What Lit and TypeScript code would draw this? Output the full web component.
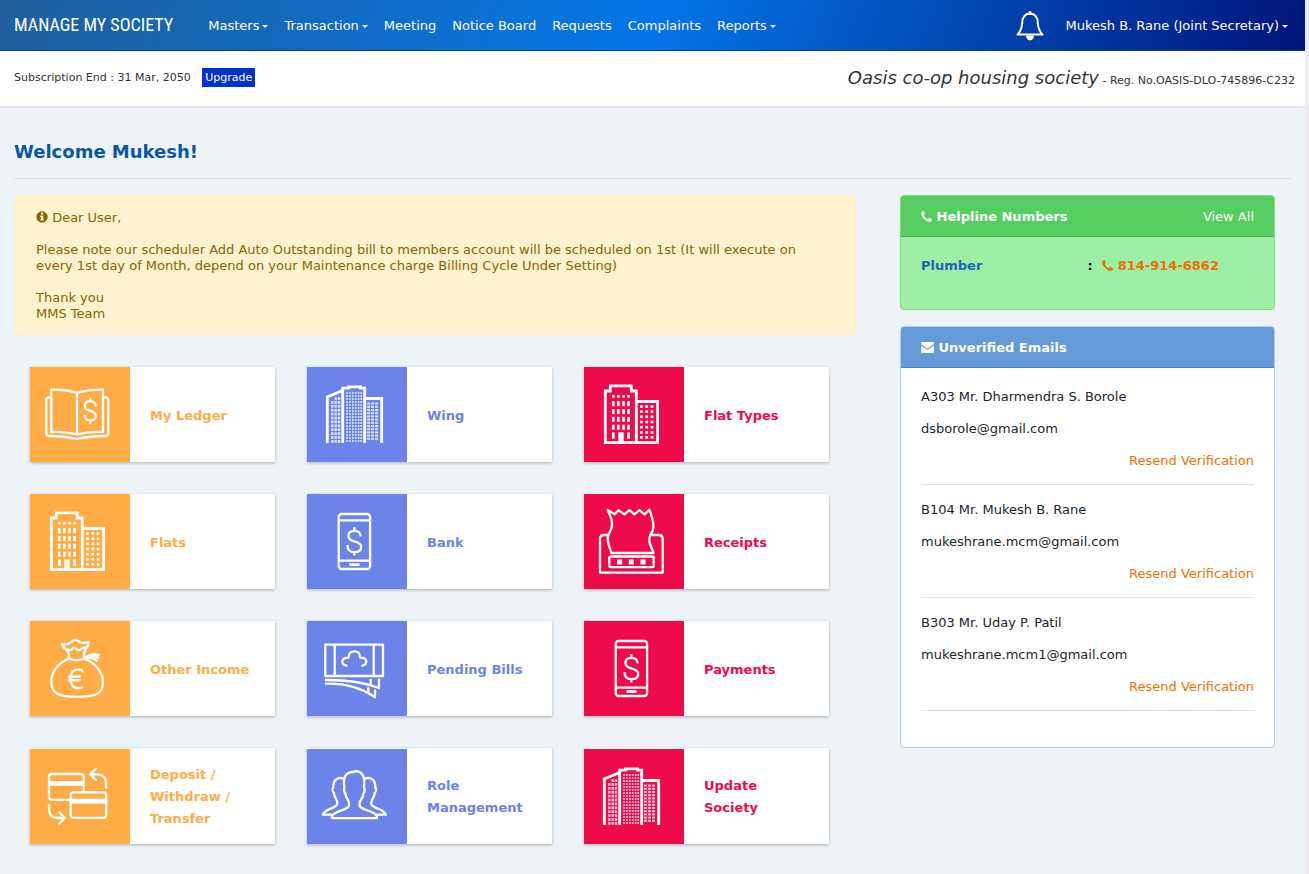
import { LitElement, html, svg, css, nothing } from "lit";
import { customElement, property } from "lit/decorators.js";

type IconName =
  | "ledger" | "towers" | "flats" | "phone" | "receipts" | "bag" | "bills" | "cards" | "people";

const rects = (xs: number[], ys: number[], w: number, h: number) =>
  xs.flatMap((x) => ys.map((y) => svg`<rect class="solid" x=${x - w / 2} y=${y - h / 2} width=${w} height=${h} />`));

const steps = (from: number, to: number, by: number) => {
  const out: number[] = [];
  for (let v = from; v <= to; v += by) out.push(v);
  return out;
};

const icons: Record<IconName, unknown> = {
  ledger: svg`
    <path d="M21.3 65V22.6Q35 22.2 47 25.6Q60 22.2 73 22.6V65Q60 64.6 47 67.4Q35 64.6 21.3 65ZM47 25.6V67" />
    <path d="M21 30.3H19Q16.3 30.3 16.3 33V66.6Q16.3 69 19 69Q34 69 47 72Q60 69 75.6 69Q78.3 69 78.3 66.6V33Q78.3 30.3 75.6 30.3H73.5" />
    <path d="M60.3 30.8V34M60.3 53.6V57M65.8 39.5Q65 34.2 60.3 34.2Q54.8 34.2 54.8 39Q54.8 42.4 60.3 43.8Q65.8 45.4 65.8 48.8Q65.8 53.6 60.3 53.6Q55 53.6 54.6 48.2" />`,
  towers: svg`
    <g class="heavy">
      <path d="M20.3 76V30L35.7 23.5M35.7 76V21.2H41.5V19.8H53.5V21.2H57.7V76M57.7 31.5H74.7V76" />
    </g>
    <g opacity="0.8">
      ${rects([25.3, 28.7, 32], steps(35.4, 75, 3.9), 2.4, 2.7)}
      ${rects([28.7, 32], [31.6], 2.4, 2.7)}
      ${rects([40, 42.9, 45.8, 48.7, 51.6, 54.2], steps(26, 75, 3), 1.7, 1.8)}
      ${rects([61.6, 65.5, 69.5], steps(36.6, 75, 3.2), 3, 2)}
    </g>`,
  flats: svg`
    <g class="heavy">
      <path d="M21.3 75.7V24H26.3V18.8H47.3V24H52.3V75.7ZM52.3 34.5H73.6V75.7H52.3" />
    </g>
    ${rects([29.3, 34.3, 39.5, 44.6], [29.3], 2.7, 2.7)}
    ${rects([29.3, 34.3, 39.5, 44.6], [36.7, 44.6, 52.3, 60.2], 2.7, 5)}
    ${rects([29.3, 44.6], [68.6], 2.7, 6.4)}
    <rect class="solid" x="34.3" y="65.3" width="5.4" height="10" />
    ${rects([57.4, 62.7, 68], [39.6, 44.7, 49.8, 55, 60.2, 65.4, 70.4], 2.8, 2.6)}`,
  phone: svg`
    <rect x="31.7" y="20" width="31.4" height="55" rx="3" />
    <path d="M32 26.3H63M32 66.7H63" />
    <path class="heavy" stroke-linecap="round" d="M43.6 70.7H51.4" />
    <path d="M47.3 33V37M47.3 58V61.5M53.8 42.4Q53.2 36.8 47.6 36.8Q41.4 36.8 41.4 42Q41.4 45.8 47.3 47.4Q54.2 49.2 54.2 53Q54.2 58.2 47.3 58.2Q40.6 58.2 40.4 51" />`,
  receipts: svg`
    <path d="M25 41H20Q16 41 16 45V78.6H78.7V45Q78.7 41 74.7 41H67" />
    <path d="M23.7 15.9L30.8 20.2L34.4 16.2L40.4 20.4L45.4 16.2L50.4 20.4L55.4 16.2L60.4 20.4L65.4 15.8C67.5 22 71.5 30 68.6 36.8C65 42 64.6 46 66 50L69.6 59H27.4C26 53 21.5 47 25 39.5C29.5 32 29 27 23.7 15.9Z" />
    <rect x="25.3" y="62.5" width="44.4" height="10.7" rx="1.6" />
    ${rects([35.7, 47.3, 59], [68], 5, 5)}`,
  bag: svg`
    <path d="M39 37.6Q39.4 31 36 28.4Q33 26 31.8 23.2Q37.5 24 40.4 21.6Q43.6 18.6 45.4 18.6Q47.6 19 49.8 21.2Q53.4 22.8 58.8 21Q58.8 24.4 56 28Q53.4 31.5 54.2 37.6" />
    <path d="M37 28.2Q41 30.2 42.6 27.6Q44.2 25.8 46.2 27.6Q48 30 50.6 28.4Q53 26.4 57 26.2" />
    <path d="M39 37.6Q46.6 40.8 54.2 37.6C66 42 73 52 73 61.5C73 72.5 66 75.8 47.3 75.8C28 75.8 21.3 72.5 21.3 60.5C21.3 51 28 42 39 37.6Z" />
    <path d="M54.2 37.4Q60 31.6 69.6 34.4M54.2 37.4Q63 35.5 67.6 40.4M58 34.6Q64 34 69 37.4" />
    <path d="M53 51Q51.6 48.4 48.6 48.4C42.6 48.4 40.4 52.4 40.4 57.6C40.4 63 43 67.2 48.6 67.2Q51 67.2 53 66M38 55.6H50.6M38 59.4H50.6" />`,
  bills: svg`
    <path d="M18.3 23.7H76V55H18.3ZM27.7 23.7V55M66.7 23.7V55" />
    <path d="M40.5 44.8Q35.3 44.4 35.3 40.6Q35.8 36.4 41.6 36.6Q41.6 30.4 47.3 30.4Q53 30.4 53 36.6Q59.2 36.4 59.2 40.6Q59 44.4 54.3 44.8" />
    <path d="M18 59Q50 58.6 72 67V57.6M18 62.7Q46 61.4 68 76V68.5M63.7 58V64M61.3 66.3V71.6" />`,
  cards: svg`
    <path d="M40.7 50.8H22Q19 50.8 19 47.8V28Q19 25 22 25H50.7Q53.7 25 53.7 28V43" />
    <rect x="40.7" y="43.3" width="35.5" height="25.6" rx="3" />
    <rect class="solid" x="19" y="32" width="34.7" height="4.8" />
    <rect class="solid" x="40.7" y="49.7" width="35.5" height="5" />
    <path d="M76 39.4V34Q76 25.3 67 25.3H60.2M66.8 19L60 25.3L66.8 31.6M19 55V60Q19 69 28 69H34.6M28.6 62.8L35 69L28.6 75.4" />`,
  people: svg`
    <path d="M25 69.2V66.8C30 60.5 42.4 61.5 42.2 55.5C42.2 50 38.6 50 38.4 44.5C36.4 42.5 37.2 40 37.4 38.5C36 29 38 22.6 47 23L48.6 22C55 22.6 58.4 27 57 38.5C58 40 58 43 56.4 44.5C56.4 50 52.4 50 52.4 55.5C52.4 61.5 65 60.5 69.8 66.8V69.2Z" />
    <path d="M37 29.6C30 27.4 26 31.6 26.4 38C25 40 25.4 42.6 27 44C27 49 30.6 50 30.4 54.4C30 60 18.6 58.6 15.8 65.7H25.4" />
    <path d="M57.6 29.6C64.6 27.4 68.6 31.6 68.2 38C69.6 40 69.2 42.6 67.6 44C67.6 49 64 50 64.2 54.4C64.6 60 76 58.6 78.8 65.7H69.2" />`,
};

const phoneGlyph = html`<svg class="glyph" viewBox="0 0 11 11" width="11" height="11" aria-hidden="true">
  <path d="M11 8.7Q11 10 9.8 10.6Q8.4 11.3 6.6 10.5Q4 9.3 2.3 7.2Q0.3 4.8 0.1 2.9Q0 1.3 1.2 0.4Q2 -0.1 2.6 0.2L3.8 2.4Q4 2.9 3.3 3.5Q2.7 4 2.9 4.4Q4 6.7 6.5 8Q6.9 8.2 7.4 7.5Q8 6.8 8.5 7L10.6 8.1Q11 8.3 11 8.7Z" fill="currentColor" />
</svg>`;

@customElement("society-tile")
export class SocietyTile extends LitElement {
  @property() label = "";
  @property() icon: IconName = "ledger";
  @property({ reflect: true }) tone = "orange";

  static styles = css`
    :host { display: block; --tone: #ffac47; }
    :host([tone="blue"]) { --tone: #6c83ea; }
    :host([tone="red"]) { --tone: #ef0b4a; }
    .tile {
      display: flex;
      align-items: center;
      height: 100%;
      background: #fff;
      box-shadow: 0 1px 3px rgba(0, 0, 0, 0.28);
      color: var(--tone);
      font-weight: bold;
      line-height: 22px;
      text-decoration: none;
    }
    .pic { flex: none; display: block; width: 100px; height: 95px; background: var(--tone); }
    .pic path, .pic rect { fill: none; stroke: #fff; stroke-width: 2.3; stroke-linejoin: round; }
    .pic .heavy, .pic .heavy path { stroke-width: 2.8; stroke-linejoin: miter; }
    .pic .solid { fill: #fff; stroke: none; }
    .label { padding: 16px 20px 14px; }
  `;

  render() {
    return html`<a class="tile" href="#">
      <svg class="pic" viewBox="0 0 100 95" aria-hidden="true">${icons[this.icon]}</svg>
      <span class="label">${this.label}</span>
    </a>`;
  }
}

@customElement("app-root")
export class AppRoot extends LitElement {
  private menu = [
    { text: "Masters", more: true },
    { text: "Transaction", more: true },
    { text: "Meeting", more: false },
    { text: "Notice Board", more: false },
    { text: "Requests", more: false },
    { text: "Complaints", more: false },
    { text: "Reports", more: true },
  ];

  private tiles: { label: string; icon: IconName; tone: string }[] = [
    { label: "My Ledger", icon: "ledger", tone: "orange" },
    { label: "Wing", icon: "towers", tone: "blue" },
    { label: "Flat Types", icon: "flats", tone: "red" },
    { label: "Flats", icon: "flats", tone: "orange" },
    { label: "Bank", icon: "phone", tone: "blue" },
    { label: "Receipts", icon: "receipts", tone: "red" },
    { label: "Other Income", icon: "bag", tone: "orange" },
    { label: "Pending Bills", icon: "bills", tone: "blue" },
    { label: "Payments", icon: "phone", tone: "red" },
    { label: "Deposit / Withdraw / Transfer", icon: "cards", tone: "orange" },
    { label: "Role Management", icon: "people", tone: "blue" },
    { label: "Update Society", icon: "towers", tone: "red" },
  ];

  private unverified = [
    { name: "A303 Mr. Dharmendra S. Borole", email: "dsborole@gmail.com" },
    { name: "B104 Mr. Mukesh B. Rane", email: "mukeshrane.mcm@gmail.com" },
    { name: "B303 Mr. Uday P. Patil", email: "mukeshrane.mcm1@gmail.com" },
  ];

  static styles = css`
    :host {
      display: flex;
      min-height: 100vh;
      background: #eef3f8;
      color: #212529;
      font: 13px/16px "DejaVu Sans", Verdana, sans-serif;
    }
    * { box-sizing: border-box; }
    a { text-decoration: none; color: inherit; }
    p, h1, h2 { margin: 0; }
    .page { flex: 1; min-width: 0; }
    .track { flex: none; width: 4px; background: #ececf1; }
    .glyph { vertical-align: -1px; }

    .nav {
      display: flex;
      align-items: center;
      height: 51px;
      padding: 2px 17px 0 14px;
      border-bottom: 1px solid #00427c;
      background: linear-gradient(110deg, #20609c 0%, #0475e8 50%, #00157a 100%);
      color: #fff;
    }
    .brand {
      margin-right: 35px;
      padding-bottom: 3px;
      font: 18px/24px "Roboto Condensed", "Open Sans Condensed", sans-serif;
    }
    .menu { display: flex; gap: 16px; flex: 1; margin: 0; padding: 0; list-style: none; }
    .more { display: flex; align-items: center; gap: 3px; }
    .more::after {
      content: "";
      border: 3px solid transparent;
      border-top-color: currentColor;
      border-bottom: 0;
    }
    .bell { display: block; margin-right: 22px; padding: 0; border: 0; background: none; color: inherit; }
    .bell svg { display: block; }

    .sub {
      display: flex;
      align-items: center;
      justify-content: space-between;
      height: 57px;
      padding: 0 10px 2px 14px;
      border-bottom: 2px solid #e4e6ea;
      background: #fff;
      color: #333;
      font-size: 11px;
    }
    .upgrade {
      height: 19px;
      margin-left: 8px;
      padding: 0 3px;
      border: 0;
      background: #0033cc;
      color: #fff;
      font: inherit;
    }
    .society { font-size: 18px; line-height: 24px; }

    .main { padding: 33px 14px 30px; }
    .welcome {
      padding-bottom: 15px;
      border-bottom: 1px solid #dbdfe4;
      color: #0a57a3;
      font-size: 18px;
      line-height: 22px;
    }
    .columns {
      display: grid;
      grid-template-columns: minmax(0, 842fr) minmax(0, 375fr);
      gap: 44px;
      align-items: start;
      padding: 16px 16px 0 0;
    }
    .alert {
      padding: 14px 21px 12px;
      border: 1px solid #ffeeba;
      border-radius: 4px;
      background: #fff2cf;
      color: #856404;
    }
    .alert p + p { margin-top: 16px; }
    .tiles {
      display: grid;
      grid-template-columns: repeat(3, minmax(0, 1fr));
      gap: 32px;
      padding: 32px 27px 0 16px;
    }
    .side { display: grid; gap: 16px; }
    .card { border: 1px solid #b5cfea; border-radius: 4px; background: #fff; overflow: hidden; }
    .head {
      display: flex;
      justify-content: space-between;
      padding: 13px 20px 11px;
      border-bottom: 1px solid #4f83bd;
      background: #659ad9;
      color: #fff;
    }
    .title { font-size: 13px; line-height: 16px; }
    .card.green { border-color: #7fdc8a; background: #9eeea6; }
    .green .head { border-color: #47ac51; background: #55cd61; }
    .body { padding: 21px 20px 19px; }
    .numbers { width: 100%; margin-bottom: 16px; border-collapse: collapse; font-weight: bold; }
    .numbers th, .numbers td { padding: 0; text-align: left; color: #000; }
    .numbers .who { width: 50%; color: #1b66bd; }
    .numbers .tel { color: #ee7202; }
    .tel a { margin-left: 8px; }
    .person { padding-bottom: 15px; border-bottom: 1px solid #e1e2e3; }
    .person + .person { padding-top: 17px; }
    .person p + p { margin-top: 16px; }
    .people { margin-bottom: 17px; }
    .resend { text-align: right; color: #ee7202; }
  `;

  render() {
    return html`
      <div class="page">
        <nav class="nav">
          <a class="brand" href="#">MANAGE MY SOCIETY</a>
          <ul class="menu">
            ${this.menu.map((m) => html`<li><a class=${m.more ? "more" : nothing} href="#">${m.text}</a></li>`)}
          </ul>
          <button class="bell" aria-label="Notifications">
            <svg width="28" height="30" viewBox="0 0 28 30" fill="none" stroke="#fff" stroke-width="2">
              <path d="M14 1.4V2.6" stroke-width="3" stroke-linecap="round" />
              <path d="M1.4 23.6Q5.6 19.6 6.2 12.4Q6.2 3 14 2.6Q21.8 3 21.8 12.4Q22.4 19.6 26.6 23.6Z" stroke-linejoin="round" />
              <path d="M10.5 25Q10.8 29 14 29Q17.2 29 17.5 25Z" fill="#fff" stroke-width="1" />
            </svg>
          </button>
          <a class="more" href="#">Mukesh B. Rane (Joint Secretary)</a>
        </nav>

        <header class="sub">
          <div>Subscription End : 31 Mar, 2050 <button class="upgrade">Upgrade</button></div>
          <div><em class="society">Oasis co-op housing society</em> - Reg. No.OASIS-DLO-745896-C232</div>
        </header>

        <main class="main">
          <h1 class="welcome">Welcome Mukesh!</h1>
          <div class="columns">
            <div>
              <section class="alert">
                <p>
                  <svg class="glyph" viewBox="0 0 12 12" width="12" height="12" aria-hidden="true">
                    <circle cx="6" cy="6" r="5.7" fill="#856404" />
                    <path d="M5 1.8H7.2V3.6H5ZM4.2 4.6H7.2V8.2H8V9.6H4.2V8.2H5V6H4.2Z" fill="#fff1cd" />
                  </svg>
                  Dear User,
                </p>
                <p>Please note our scheduler Add Auto Outstanding bill to members account will be scheduled on 1st (It will execute on every 1st day of Month, depend on your Maintenance charge Billing Cycle Under Setting)</p>
                <p>Thank you<br />MMS Team</p>
              </section>
              <section class="tiles">
                ${this.tiles.map((t) => html`<society-tile .label=${t.label} .icon=${t.icon} .tone=${t.tone}></society-tile>`)}
              </section>
            </div>

            <aside class="side">
              <section class="card green">
                <div class="head">
                  <h2 class="title">${phoneGlyph} Helpline Numbers</h2>
                  <a href="#">View All</a>
                </div>
                <div class="body">
                  <table class="numbers">
                    <tr>
                      <th class="who" scope="row">Plumber</th>
                      <td>:</td>
                      <td class="tel"><a href="#">${phoneGlyph} 814-914-6862</a></td>
                    </tr>
                  </table>
                </div>
              </section>
              <section class="card">
                <div class="head">
                  <h2 class="title">
                    <svg class="glyph" viewBox="0 0 13 11" width="13" height="11" aria-hidden="true">
                      <path d="M0 1Q0 0 1 0H12Q13 0 13 1Q13 2 12 2.8L7.5 6Q6.5 6.6 5.5 6L1 2.8Q0 2 0 1ZM0 3.4L5 7Q6.5 8 8 7L13 3.4V10Q13 11 12 11H1Q0 11 0 10Z" fill="currentColor" />
                    </svg>
                    Unverified Emails
                  </h2>
                </div>
                <div class="body">
                  <div class="people">
                    ${this.unverified.map((u) => html`<div class="person">
                      <p>${u.name}</p>
                      <p>${u.email}</p>
                      <p class="resend"><a href="#">Resend Verification</a></p>
                    </div>`)}
                  </div>
                </div>
              </section>
            </aside>
          </div>
        </main>
      </div>
      <div class="track"></div>
    `;
  }
}
